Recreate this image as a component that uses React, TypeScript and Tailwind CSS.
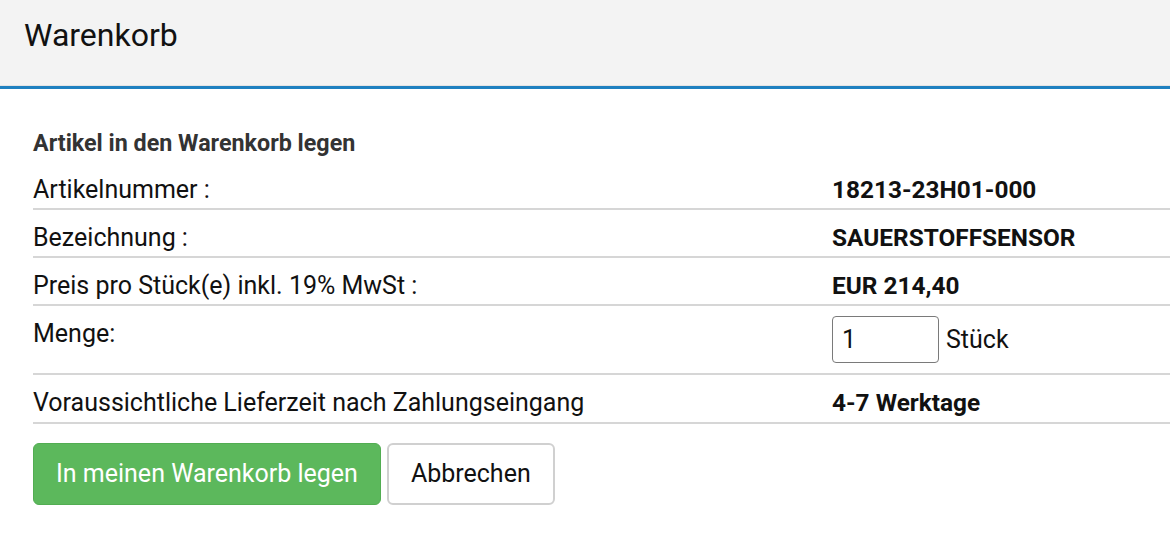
import React, { useState } from "react";

type Row = {
  label: string;
  value: string;
};

const rows: Row[] = [
  { label: "Artikelnummer :", value: "18213-23H01-000" },
  { label: "Bezeichnung :", value: "SAUERSTOFFSENSOR" },
  { label: "Preis pro Stück(e) inkl. 19% MwSt :", value: "EUR 214,40" },
];

const App = () => {
  const [menge, setMenge] = useState<string>("1");

  return (
    <div
      className="w-[1170px] h-[540px] bg-white text-[#111] overflow-hidden"
      style={{ fontFamily: "Roboto, 'Liberation Sans', sans-serif" }}
    >
      <div className="h-[86px] bg-[#f3f3f3] border-b border-[#e4e4e4] px-6 pt-[19px]">
        <h1 className="text-[32px] leading-8 text-[#111]">Warenkorb</h1>
      </div>
      <div className="h-[3px] bg-[#1f80c0]" />

      <div className="pl-[33px] pt-[42px]">
        <div className="text-[23.3px] font-bold text-[#333] leading-6 pb-[23px]">
          Artikel in den Warenkorb legen
        </div>

        {rows.map((row, i) => (
          <div
            key={row.label}
            className={
              "flex text-[25px] leading-6 border-b-2 border-[#d6d6d6] pb-[6px] " +
              (i === 0 ? "pt-0" : "pt-[16px]")
            }
          >
            <div className="w-[799px]">{row.label}</div>
            <div className="font-bold text-[24.4px]">{row.value}</div>
          </div>
        ))}

        <div className="flex items-start text-[25px] leading-6 border-b-2 border-[#d6d6d6] py-[10px]">
          <div className="w-[799px] pt-[6px]">Menge:</div>
          <input
            className="w-[107px] h-[47px] border border-[#7a7a7a] rounded-[4px] px-[9px] text-[25px] outline-none"
            value={menge}
            onChange={(e) => setMenge(e.target.value)}
          />
          <span className="ml-[7px] pt-[12px]">Stück</span>
        </div>

        <div className="flex text-[25px] leading-6 border-b-2 border-[#d6d6d6] pt-[16px] pb-[7px]">
          <div className="w-[799px]">Voraussichtliche Lieferzeit nach Zahlungseingang</div>
          <div className="font-bold text-[24.4px]">4-7 Werktage</div>
        </div>

        <div className="flex gap-[6px] pt-[19px]">
          <button className="h-[62px] px-[22px] bg-[#5cb85c] text-white text-[25px] rounded-[6px] border border-[#52ad52]">
            In meinen Warenkorb legen
          </button>
          <button className="h-[62px] px-[22px] bg-white text-[#111] text-[25px] rounded-[6px] border-2 border-[#d0d0d0]">
            Abbrechen
          </button>
        </div>
      </div>
    </div>
  );
};

export default App;
